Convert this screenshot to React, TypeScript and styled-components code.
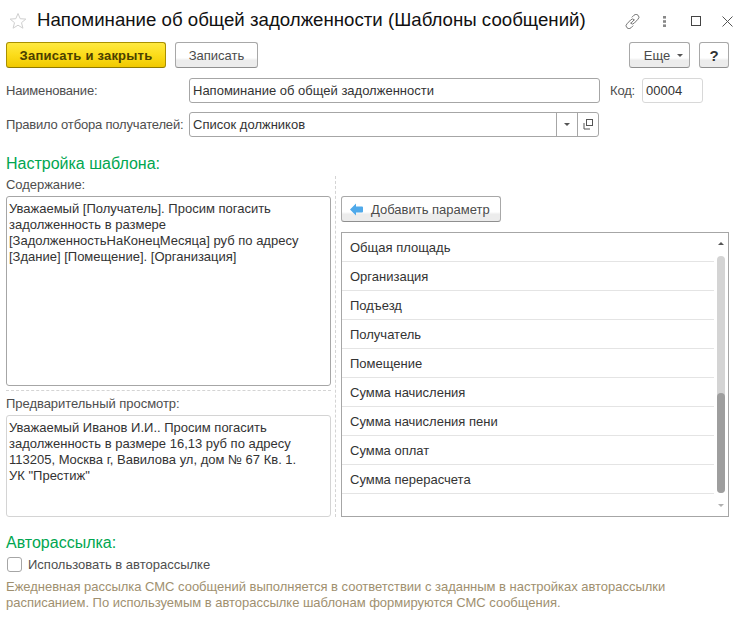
import React from "react";
import styled, { createGlobalStyle } from "styled-components";

const Global = createGlobalStyle`
  html, body { margin: 0; padding: 0; background: #fff; }
  body { font-family: "Liberation Sans", Arial, sans-serif; font-size: 13px; color: #4b4b4b; }
`;

const Page = styled.div`
  width: 743px;
  height: 621px;
  overflow: hidden;
  box-sizing: border-box;
  padding: 0 14px 0 6px;
  background: #fff;
  display: flex;
  flex-direction: column;
`;

const Header = styled.header`
  height: 42px;
  display: flex;
  align-items: center;
  padding-left: 3px;
  box-sizing: border-box;
`;

const Title = styled.h1`
  margin: 0 0 2px 10px;
  font-size: 18.67px;
  font-weight: 400;
  color: #111;
  white-space: nowrap;
  flex: 1;
`;

const WindowActions = styled.div`
  display: flex;
  align-items: center;
  margin-right: -4px;
  svg:nth-child(2) { margin-left: 23px; }
  svg:nth-child(3) { margin-left: 25px; }
  svg:nth-child(4) { margin-left: 21px; }
`;

const Toolbar = styled.div`
  display: flex;
  height: 26px;
  align-items: stretch;
`;

const Spacer = styled.div`
  flex: 1;
`;

const Btn = styled.button<{ $w: number; $ml?: number; $primary?: boolean }>`
  width: ${(p) => p.$w}px;
  margin-left: ${(p) => p.$ml ?? 0}px;
  box-sizing: border-box;
  padding: 0;
  height: 26px;
  border-radius: 3px;
  font-family: inherit;
  font-size: 13px;
  letter-spacing: ${(p) => (p.$primary ? "0.22px" : "0")};
  display: flex;
  align-items: center;
  justify-content: center;
  border: 1px solid ${(p) => (p.$primary ? "#a99000" : "#a8a8a8")};
  border-bottom-color: ${(p) => (p.$primary ? "#8f7a00" : "#8f8f8f")};
  background: ${(p) =>
    p.$primary
      ? "linear-gradient(#ffe941 0%, #fbdc1a 50%, #f1c900 100%)"
      : "linear-gradient(#fff 0%, #fff 62%, #ececec 72%, #ececec 100%)"};
  color: ${(p) => (p.$primary ? "#4b4000" : "#4b4b4b")};
  font-weight: ${(p) => (p.$primary ? 700 : 400)};
`;

const MoreBtn = styled(Btn)`
  padding-left: 8px;
`;

const HelpBtn = styled(Btn)`
  font-size: 15px;
  font-weight: 700;
  color: #333;
`;

const FormRow = styled.div<{ $mt: number }>`
  display: flex;
  align-items: center;
  height: 25px;
  margin-top: ${(p) => p.$mt}px;
`;

const Label = styled.label<{ $w?: number; $ml?: number }>`
  width: ${(p) => (p.$w ? `${p.$w}px` : "auto")};
  margin-left: ${(p) => p.$ml ?? 0}px;
  font-size: 13px;
  letter-spacing: -0.18px;
  color: #4e4e4e;
  white-space: nowrap;
`;

const Input = styled.div<{ $w: number; $ml?: number; $light?: boolean }>`
  width: ${(p) => p.$w}px;
  margin-left: ${(p) => p.$ml ?? 0}px;
  height: 25px;
  box-sizing: border-box;
  border: 1px solid ${(p) => (p.$light ? "#d8d8d8" : "#a6a6a6")};
  border-radius: 3px;
  padding: 0 3px;
  display: flex;
  align-items: center;
  font-size: 13px;
  color: #333;
  white-space: nowrap;
`;

const Select = styled(Input)`
  padding: 0 0 0 3px;
  justify-content: space-between;
`;

const SelectParts = styled.div`
  display: flex;
  height: 100%;
`;

const SelectPart = styled.div<{ $w: number }>`
  width: ${(p) => p.$w}px;
  border-left: 1px solid #a6a6a6;
  display: flex;
  align-items: center;
  justify-content: center;
  box-sizing: border-box;
`;

const SectionTitle = styled.h2<{ $mt: number }>`
  margin: ${(p) => p.$mt}px 0 0;
  font-size: 16px;
  line-height: 18px;
  font-weight: 400;
  color: #00a650;
`;

const TemplateGrid = styled.div`
  display: grid;
  grid-template-columns: 325px 388px;
  column-gap: 10px;
  position: relative;
  margin-top: 3px;
`;

const VerticalDash = styled.div`
  position: absolute;
  left: 329px;
  top: 0;
  bottom: 0;
  border-left: 1px dashed #d4d4d4;
`;

const LeftCol = styled.div`
  display: flex;
  flex-direction: column;
`;

const SmallLabel = styled.div`
  height: 20px;
  padding-top: 1px;
  box-sizing: border-box;
  line-height: 16px;
  font-size: 13px;
  letter-spacing: -0.04px;
  color: #4e4e4e;
`;

const TextBox = styled.div<{ $h: number; $pt: number; $light?: boolean }>`
  height: ${(p) => p.$h}px;
  box-sizing: border-box;
  border: 1px solid ${(p) => (p.$light ? "#d4d4d4" : "#a6a6a6")};
  border-radius: 3px;
  padding: ${(p) => p.$pt}px 2px 0;
  font-size: 13px;
  line-height: 16px;
  color: #333;
  white-space: pre-line;
`;

const HorizontalDash = styled.div`
  margin: 4px 0;
  border-top: 1px dashed #d4d4d4;
`;

const RightCol = styled.div`
  display: flex;
  flex-direction: column;
  padding-top: 20px;
`;

const AddIconBtn = styled(Btn)`
  justify-content: flex-start;
  padding-left: 8px;
  gap: 8px;
`;

const ListBox = styled.div`
  margin-top: 10px;
  height: 285px;
  box-sizing: border-box;
  border: 1px solid #a6a6a6;
  position: relative;
`;

const ListRow = styled.div`
  height: 29px;
  width: 372px;
  box-sizing: border-box;
  border-bottom: 1px solid #e4e4e4;
  padding: 1px 0 0 8px;
  font-size: 13px;
  line-height: 28px;
  color: #333;
`;

const ScrollTrack = styled.div`
  position: absolute;
  right: 3px;
  top: 23px;
  width: 8px;
  height: 237px;
  border-radius: 4px;
  background: #d4d4d4;
`;

const ScrollThumb = styled.div`
  position: absolute;
  left: 0;
  right: 0;
  bottom: 0;
  height: 100px;
  border-radius: 4px;
  background: #9e9e9e;
`;

const ScrollArrow = styled.div<{ $down?: boolean }>`
  position: absolute;
  right: 4px;
  ${(p) => (p.$down ? "bottom: 9px;" : "top: 9px;")}
  width: 0;
  height: 0;
  border-left: 3px solid transparent;
  border-right: 3px solid transparent;
  ${(p) => (p.$down ? "border-top: 3px solid #b0b0b0;" : "border-bottom: 3px solid #555;")}
`;

const CheckRow = styled.div`
  display: flex;
  align-items: center;
  height: 15px;
  margin-top: 5px;
  padding-left: 1px;
`;

const CheckBoxMark = styled.div`
  width: 15px;
  height: 15px;
  box-sizing: border-box;
  border: 1px solid #a6a6a6;
  border-radius: 3px;
`;

const CheckLabel = styled.span`
  margin-left: 6px;
  font-size: 13px;
  color: #4e4e4e;
`;

const Help = styled.p`
  margin: 7px 0 0;
  font-size: 13px;
  letter-spacing: -0.02px;
  line-height: 16px;
  color: #a0906f;
  width: 680px;
`;

const Caret = styled.span<{ $ml?: number }>`
  display: inline-block;
  margin-left: ${(p) => p.$ml ?? 0}px;
  width: 0;
  height: 0;
  border-left: 3px solid transparent;
  border-right: 3px solid transparent;
  border-top: 3px solid #555;
`;

const rows = [
  "Общая площадь",
  "Организация",
  "Подъезд",
  "Получатель",
  "Помещение",
  "Сумма начисления",
  "Сумма начисления пени",
  "Сумма оплат",
  "Сумма перерасчета",
];

export default function App() {
  return (
    <Page>
      <Global />
      <Header>
        <svg width="18" height="18" viewBox="0 0 18 18">
          <path d="M9 1.5l2.2 5.2 5.6.4-4.3 3.6 1.4 5.5L9 13.2l-4.9 3 1.4-5.5L1.2 7.1l5.6-.4z" fill="#fff" stroke="#cfcfcf" />
        </svg>
        <Title>Напоминание об общей задолженности (Шаблоны сообщений)</Title>
        <WindowActions>
          <svg width="15" height="15" viewBox="0 0 15 15" fill="none" stroke="#777" strokeWidth="1">
            <path d="M6 9.2L9.2 5.8M6.8 3.4l2.2-2.2a2.7 2.7 0 0 1 4 0 2.7 2.7 0 0 1 0 4L9.4 9a2.7 2.7 0 0 1-4 0M8.2 11.6L6 13.8a2.7 2.7 0 0 1-4 0 2.7 2.7 0 0 1 0-4L5.6 6a2.7 2.7 0 0 1 4 0" />
          </svg>
          <svg width="3" height="11" viewBox="0 0 3 11" fill="#888">
            <rect width="3" height="2.6" />
            <rect y="4.2" width="3" height="2.6" />
            <rect y="8.4" width="3" height="2.6" />
          </svg>
          <svg width="10" height="10" viewBox="0 0 10 10" fill="none" stroke="#444">
            <rect x="0.5" y="0.5" width="9" height="9" />
          </svg>
          <svg width="11" height="11" viewBox="0 0 11 11" fill="none" stroke="#555">
            <path d="M0.5 0.5l10 10M10.5 0.5l-10 10" />
          </svg>
        </WindowActions>
      </Header>
      <Toolbar>
        <Btn $primary $w={160}>Записать и закрыть</Btn>
        <Btn $w={83} $ml={9}>Записать</Btn>
        <Spacer />
        <MoreBtn $w={61}>
          Еще<Caret $ml={7} />
        </MoreBtn>
        <HelpBtn $w={30} $ml={9}>?</HelpBtn>
      </Toolbar>
      <FormRow $mt={10}>
        <Label $w={183}>Наименование:</Label>
        <Input $w={411}>Напоминание об общей задолженности</Input>
        <Label $w={22} $ml={10}>Код:</Label>
        <Input $w={61} $ml={10} $light>00004</Input>
      </FormRow>
      <FormRow $mt={9}>
        <Label $w={183}>Правило отбора получателей:</Label>
        <Select $w={410}>
          Список должников
          <SelectParts>
            <SelectPart $w={21}><Caret /></SelectPart>
            <SelectPart $w={21}>
              <svg width="11" height="11" viewBox="0 0 11 11" fill="none" stroke="#555">
                <rect x="3.5" y="0.5" width="6" height="6" />
                <path d="M1 4v6h6" />
              </svg>
            </SelectPart>
          </SelectParts>
        </Select>
      </FormRow>
      <SectionTitle $mt={18}>Настройка шаблона:</SectionTitle>
      <TemplateGrid>
        <VerticalDash />
        <LeftCol>
          <SmallLabel>Содержание:</SmallLabel>
          <TextBox $h={190} $pt={4}>
            Уважаемый [Получатель]. Просим погасить{"\n"}задолженность в размере{"\n"}[ЗадолженностьНаКонецМесяца] руб по адресу{"\n"}[Здание] [Помещение]. [Организация]
          </TextBox>
          <HorizontalDash />
          <SmallLabel>Предварительный просмотр:</SmallLabel>
          <TextBox $h={102} $pt={4} $light>
            Уважаемый Иванов И.И.. Просим погасить{"\n"}задолженность в размере 16,13 руб по адресу{"\n"}113205, Москва г, Вавилова ул, дом № 67 Кв. 1.{"\n"}УК "Престиж"
          </TextBox>
        </LeftCol>
        <RightCol>
          <AddIconBtn $w={160}>
            <svg width="13" height="13" viewBox="0 0 13 13">
              <path d="M0 6.5L6 0.5V3.5H12Q13 3.5 13 4.5V8.5Q13 9.5 12 9.5H6V12.5Z" fill="#4fa9ea" />
            </svg>
            Добавить параметр
          </AddIconBtn>
          <ListBox>
            {rows.map((r) => (
              <ListRow key={r}>{r}</ListRow>
            ))}
            <ScrollArrow />
            <ScrollTrack>
              <ScrollThumb />
            </ScrollTrack>
            <ScrollArrow $down />
          </ListBox>
        </RightCol>
      </TemplateGrid>
      <SectionTitle $mt={17}>Авторассылка:</SectionTitle>
      <CheckRow>
        <CheckBoxMark />
        <CheckLabel>Использовать в авторассылке</CheckLabel>
      </CheckRow>
      <Help>
        Ежедневная рассылка СМС сообщений выполняется в соответствии с заданным в настройках авторассылки расписанием. По используемым в авторассылке шаблонам формируются СМС сообщения.
      </Help>
    </Page>
  );
}
